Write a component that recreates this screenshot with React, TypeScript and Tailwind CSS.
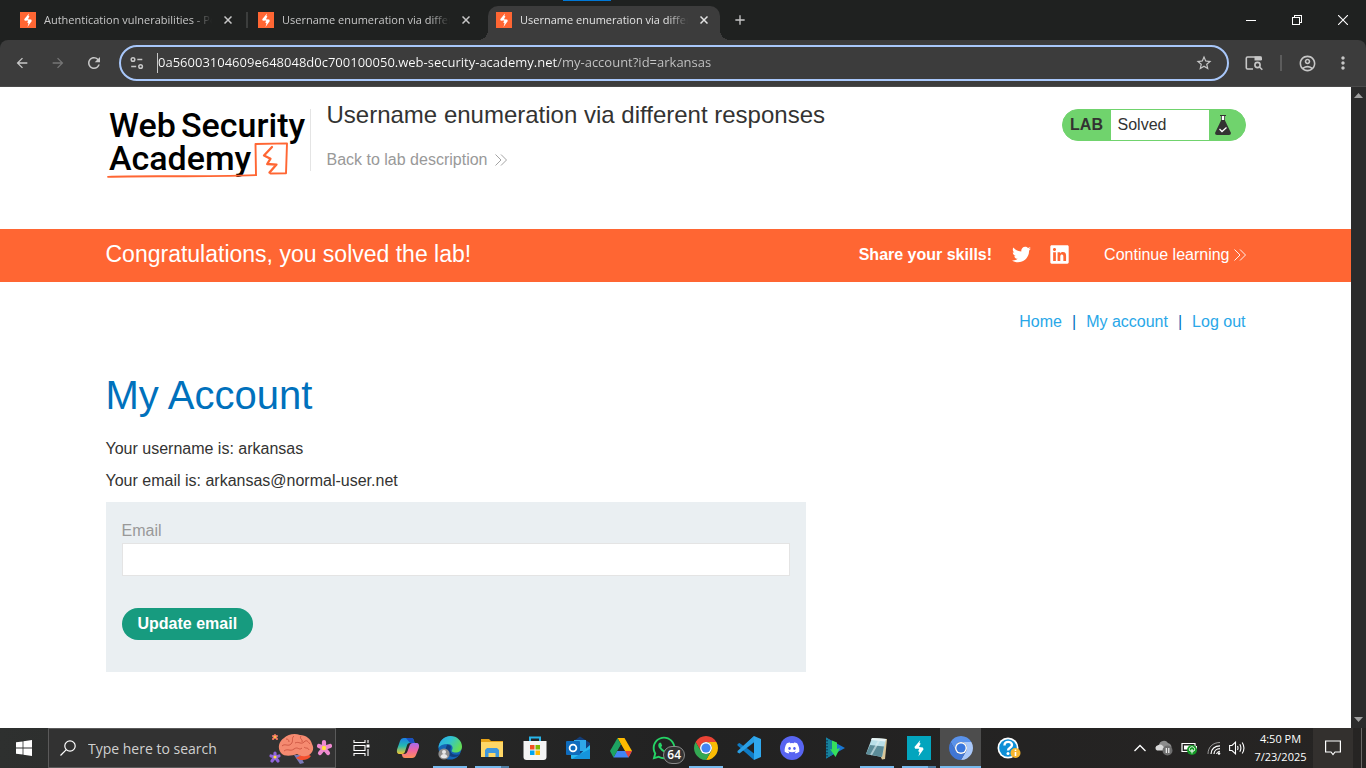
import React from "react";
import type { ReactNode } from "react";
import { FaTwitter, FaLinkedin, FaWhatsapp, FaDiscord } from "react-icons/fa";
import {
  MdArrowBack,
  MdArrowForward,
  MdRefresh,
  MdStarBorder,
  MdOutlineAccountCircle,
  MdMoreVert,
  MdAdd,
} from "react-icons/md";

const TAB_TITLES = [
  { id: 1, title: "Authentication vulnerabilities - PortSwigger", active: false },
  { id: 2, title: "Username enumeration via different responses", active: false },
  { id: 3, title: "Username enumeration via different responses", active: true },
];

function Bolt() {
  return (
    <path
      fill="#fff"
      d="M9 1.500 4.200 7.200l.6 1.500 3.400-.1-.9 2.200 1.200.5L7.500 15l4.300-6-.6-1.400-3.200-.4L9.400 4.300l-1-.4z"
    />
  );
}

function Favicon() {
  return (
    <svg viewBox="0 0 16 16" className="size-4 shrink-0" aria-hidden="true">
      <rect width="16" height="16" fill="#ff6633" />
      <Bolt />
    </svg>
  );
}

function Tab({ title, active }: { title: string; active: boolean }) {
  return (
    <div
      className={
        active
          ? "relative flex h-[34px] w-[232px] items-center gap-2 rounded-t-[10px] bg-[#3c3c3c] px-2 pb-1.5 text-[#e3e3e3]"
          : "relative flex h-[34px] w-[232px] items-center gap-2 px-2 pb-1.5 text-[#c7c7c7]"
      }
    >
      {active && (
        <>
          <span className="absolute -left-2.5 bottom-0 size-2.5 bg-[radial-gradient(circle_at_0_0,transparent_10px,#3c3c3c_10px)]" />
          <span className="absolute -right-2.5 bottom-0 size-2.5 bg-[radial-gradient(circle_at_100%_0,transparent_10px,#3c3c3c_10px)]" />
        </>
      )}
      <Favicon />
      <span className="min-w-0 flex-1 overflow-hidden whitespace-nowrap text-[11px] leading-4 [mask-image:linear-gradient(to_right,#000_88%,transparent)]">
        {title}
      </span>
      <button type="button" aria-label="Close tab" className="grid size-4 place-items-center">
        <svg viewBox="0 0 8 8" className="size-2" stroke="currentColor" strokeWidth="1.500">
          <path d="m.500.500 7 7M7.500.500l-7 7" />
        </svg>
      </button>
    </div>
  );
}

function TitleBar() {
  return (
    <div className="relative flex h-10 shrink-0 items-end bg-[#1f2120] pl-3">
      <span className="absolute left-[563px] top-0 h-px w-12 bg-[#0078d7]" />
      <Tab title={TAB_TITLES[0].title} active={false} />
      <span className="flex h-[34px] w-1.5 justify-center pt-1.5">
        <span className="h-4 w-0.5 bg-[#3c3e3d]" />
      </span>
      <Tab title={TAB_TITLES[1].title} active={false} />
      <span className="w-1.5" />
      <Tab title={TAB_TITLES[2].title} active />
      <button type="button" aria-label="New tab" className="mb-2 ml-2 grid size-6 place-items-center text-[#c7c7c7]">
        <MdAdd className="size-4" />
      </button>
      <div className="ml-auto flex h-10 text-white">
        <button type="button" aria-label="Minimize" className="grid w-[46px] place-items-center">
          <svg viewBox="0 0 10 10" className="size-2.5" shapeRendering="crispEdges">
            <path d="M0 5.5h10" stroke="currentColor" />
          </svg>
        </button>
        <button type="button" aria-label="Restore" className="grid w-[46px] place-items-center">
          <svg viewBox="0 0 10 10" className="size-2.5" fill="none" stroke="currentColor" shapeRendering="crispEdges">
            <path d="M.5 2.5h7v7h-7zM2.5 2.5v-2h7v7h-2" />
          </svg>
        </button>
        <button type="button" aria-label="Close" className="grid w-[46px] place-items-center">
          <svg viewBox="0 0 10 10" className="size-2.5" fill="none" stroke="currentColor" strokeWidth="1.1">
            <path d="M0 0l10 10M10 0 0 10" />
          </svg>
        </button>
      </div>
    </div>
  );
}

function Toolbar() {
  return (
    <div className="shrink-0 bg-[#1f2120]">
      <div className="flex h-[47px] items-center rounded-t-[8px] border-b border-[#4a4a4a] bg-[#3c3c3c] pl-3 text-[#c7c7c7]">
        <div className="flex w-[107px] gap-4">
          <button type="button" aria-label="Back" className="grid size-5 place-items-center">
            <MdArrowBack className="size-4" />
          </button>
          <button type="button" aria-label="Forward" className="grid size-5 place-items-center text-[#757575]">
            <MdArrowForward className="size-4" />
          </button>
          <button type="button" aria-label="Reload" className="grid size-5 place-items-center">
            <MdRefresh className="size-[18px]" />
          </button>
        </div>
        <div className="flex h-9 flex-1 items-center rounded-full border-2 border-[#a8c7fa] bg-[#3c3c3c] pl-2">
          <svg viewBox="0 0 16 16" className="size-4" fill="none" stroke="currentColor" strokeWidth="1.5" aria-hidden="true">
            <circle cx="4" cy="4.5" r="1.8" />
            <path d="M8.3 4.5h5M2.2 11.5h5" />
            <circle cx="11.6" cy="11.5" r="1.8" />
          </svg>
          <span className="ml-3 h-5 w-px bg-[#c7c7c7]" />
          <input
            aria-label="Address bar"
            readOnly
            value="0a56003104609e648048d0c700100050.web-security-academy.net/my-account?id=arkansas"
            className="min-w-0 flex-1 bg-[linear-gradient(to_right,#ffffff_400px,#c7c7c7_400px)] bg-clip-text text-[13px] text-transparent outline-none"
          />
          <button type="button" aria-label="Bookmark this tab" className="mr-[13px] grid size-5 place-items-center">
            <MdStarBorder className="size-[18px]" />
          </button>
        </div>
        <div className="flex w-[137px] items-center">
          <button type="button" aria-label="Search tabs" className="ml-[15px] grid size-5 place-items-center">
            <svg viewBox="0 0 18 16" className="h-4 w-[18px]" fill="none" stroke="currentColor" strokeWidth="1.6">
              <path d="M8 14H2.5A1.2 1.2 0 0 1 1.3 12.800V3.200A1.2 1.2 0 0 1 2.5 2H15a1.200 1.200 0 0 1 1.200 1.200V5" />
              <path d="M9.500 1.500h7v4h-7z" fill="currentColor" stroke="none" />
              <circle cx="12.500" cy="10" r="2.600" />
              <path d="m14.500 12 2.800 2.800" />
            </svg>
          </button>
          <span className="ml-4 h-4 w-0.5 bg-[#5c5c5c]" />
          <button type="button" aria-label="Profile" className="ml-[15px] grid size-5 place-items-center">
            <MdOutlineAccountCircle className="size-[19px]" />
          </button>
          <button type="button" aria-label="Menu" className="ml-4 grid size-5 place-items-center">
            <MdMoreVert className="size-5" />
          </button>
        </div>
      </div>
    </div>
  );
}

function Chevrons() {
  return (
    <svg viewBox="0 0 12 12" className="size-3" fill="none" stroke="currentColor" strokeWidth="0.9" aria-hidden="true">
      <path d="M.5.5 6 6 .5 11.500M6 .5 11.500 6 6 11.500" />
    </svg>
  );
}

function AcademyLogo() {
  return (
    <svg viewBox="0 0 200 72" className="h-[72px] w-[200px] overflow-visible" role="img" aria-label="Web Security Academy">
      <g fill="#000" fontFamily="Roboto, 'Liberation Sans', sans-serif" fontSize="34" fontWeight="500">
        <text x="3" y="28">Web</text>
        <text x="75" y="28">Security</text>
        <text x="3" y="61">Academy</text>
      </g>
      <g fill="none" stroke="#ff6633" strokeLinejoin="round" strokeLinecap="round">
        <path d="M2 67.800c35-1.400 90 .5 148-1.700" strokeWidth="1.800" />
        <path d="M150 66 149.500 35l31.500-.6-1 29.800-15.500.3" strokeWidth="1.900" />
        <path d="m166 38-8 8.500 6.500 3.200-3.300 5.300 9.300.6-7 8" strokeWidth="2.300" />
      </g>
    </svg>
  );
}

function LabStatus() {
  return (
    <div className="flex h-8 w-[184px] overflow-hidden rounded-full border border-[#70d36d] bg-[#70d36d] text-[#333332]">
      <span className="flex w-12 items-center justify-center text-[16px] font-bold">LAB</span>
      <span className="flex-1 bg-white pl-[7px] text-[16px] leading-[29px]">Solved</span>
      <span className="flex w-9 items-center pl-1.5">
        <svg viewBox="0 0 16 20" className="h-5 w-4" aria-hidden="true">
          <path d="M6 .500h4v5l6 12.500q0 2-2 2H2q-2 0-2-2L6 5.500z" fill="#333332" />
          <path d="M6.800 1h2.400v4H6.800z" fill="#fff" />
          <path d="M5 .500h6" stroke="#333332" />
          <path d="m4.500 14 2.500 2.500 4.500-4" fill="none" stroke="#fff" strokeWidth="1.300" />
        </svg>
      </span>
    </div>
  );
}

function LabPage() {
  return (
    <div className="min-w-0 flex-1 overflow-hidden bg-white font-['Liberation_Sans',Arial,sans-serif] text-[16px] text-[#333332]">
      <header className="mx-auto flex h-[142px] max-w-[1140px] items-start pt-[22px]">
        <a href="#academy" className="w-[204px]">
          <AcademyLogo />
        </a>
        <div className="h-[62px] w-px bg-[#e4e4e4]" />
        <div className="-mt-2 ml-4 flex-1">
          <h2 className="text-[24px] leading-7">Username enumeration via different responses</h2>
          <a href="#description" className="mt-[19px] inline-flex items-center gap-2 leading-6 text-[#999]">
            Back to lab description
            <Chevrons />
          </a>
        </div>
        <LabStatus />
      </header>

      <section className="bg-[#ff6633] text-white">
        <div className="mx-auto flex h-[53px] max-w-[1140px] items-center pb-0.5">
          <h3 className="flex-1 text-[23px]">Congratulations, you solved the lab!</h3>
          <span className="font-bold">Share your skills!</span>
          <a href="#twitter" aria-label="Share on Twitter" className="ml-5">
            <FaTwitter className="size-[19px]" />
          </a>
          <a href="#linkedin" aria-label="Share on LinkedIn" className="ml-[18px]">
            <FaLinkedin className="size-[21px]" />
          </a>
          <a href="#continue" className="ml-[34px] flex items-center gap-1">
            Continue learning
            <Chevrons />
          </a>
        </div>
      </section>

      <main className="mx-auto max-w-[1140px]">
        <nav className="flex justify-end gap-2.5 pt-7 leading-6 text-[#29a7e8]">
          <a href="#home">Home</a>
          <span className="text-[#0071bc]">|</span>
          <a href="#account">My account</a>
          <span className="text-[#0071bc]">|</span>
          <a href="#logout">Log out</a>
        </nav>
        <h1 className="mt-9 text-[40px] leading-[50px] text-[#0071bc]">My Account</h1>
        <div className="mt-[17px] flex flex-col gap-2 leading-6">
          <p>Your username is: arkansas</p>
          <p>Your email is: arkansas@normal-user.net</p>
        </div>
        <form
          className="mt-[9px] max-w-[700px] bg-[#eaeff2] px-4 pb-8 pt-4"
          onSubmit={(event) => event.preventDefault()}
        >
          <label htmlFor="email" className="block leading-[25px] text-[#999]">
            Email
          </label>
          <input id="email" type="email" className="block h-[33px] w-full border border-[#e4e4e4] bg-white px-2 outline-none" />
          <button type="submit" className="mt-8 block h-8 rounded-full bg-[#179b7f] px-4 font-bold text-white">
            Update email
          </button>
        </form>
      </main>
    </div>
  );
}

function ScrollBar() {
  return (
    <div className="flex w-[15px] shrink-0 flex-col items-center justify-between bg-[#2b2b2b] py-1.5 text-[#9f9f9f]">
      <svg viewBox="0 0 9 5" className="h-[5px] w-[9px]" fill="currentColor" aria-hidden="true">
        <path d="M0 5h9L4.500 0z" />
      </svg>
      <svg viewBox="0 0 9 5" className="h-[5px] w-[9px]" fill="currentColor" aria-hidden="true">
        <path d="M0 0h9L4.500 5z" />
      </svg>
    </div>
  );
}

function BrainArt() {
  return (
    <svg viewBox="0 0 66 34" className="h-[34px] w-[66px] shrink-0" aria-hidden="true">
      <path d="M26 24h6l4 8-4 1z" fill="#7b79b8" />
      <path d="M28 27c4 3 12 3 15-2l-6-3z" fill="#f4502f" />
      <path
        d="M13 22c-4-5-2-12 3-15 4-4 11-5 16-3 6 0 11 4 12 9 3 5 0 11-6 12-4 1-7-1-9-2-5 2-13 3-16-1z"
        fill="#f58a70"
      />
      <path
        d="M14 15c3-3 6 1 9-2s0-6 3-8M16 20c4-3 6 1 10-2s5 2 8-1M27 12c4-2 6 2 9-1s4 0 6 2M33 5c-2 3 2 3 1 6M18 8c2 0 3 1 3 3M36 16c2 2 4 0 5 3"
        fill="none"
        stroke="#c9523f"
        strokeWidth="0.900"
      />
      <g stroke="#ef8ad0" strokeWidth="4.200" strokeLinecap="round">
        <path d="m56 17 0-6M56 17l6-2M56 17l4 5M56 17l-4 5M56 17l-5-2" />
      </g>
      <circle cx="56" cy="17" r="2.200" fill="#ffe23d" />
      <g stroke="#9064dc" strokeWidth="3.200" strokeLinecap="round">
        <path d="M7 26v-4M7 26l4-1M7 26l3 4M7 26l-3 4M7 26l-4-1" />
      </g>
      <circle cx="7" cy="26" r="1.600" fill="#ffe23d" />
      <g stroke="#f07a62" strokeWidth="2" strokeLinecap="round">
        <path d="M7 6V4M7 6l2-1M7 6l2 2M7 6 5 8M7 6 5 5" />
      </g>
      <circle cx="7" cy="6" r="1" fill="#ffd23d" />
    </svg>
  );
}

function Icon({ children }: { children: ReactNode }) {
  return (
    <svg viewBox="0 0 24 24" className="size-6" aria-hidden="true">
      {children}
    </svg>
  );
}

function Browser({ top, right, left, center }: { top: string; right: string; left: string; center: string }) {
  return (
    <Icon>
      <path d="M12 6H22.390A12 12 0 0 0 1.610 6L6.800 15A6 6 0 0 1 12 6Z" fill={top} />
      <path d="M12 6H22.390A12 12 0 0 1 12 24L17.200 15A6 6 0 0 0 12 6Z" fill={right} />
      <path d="M1.610 6L6.800 15A6 6 0 0 0 17.200 15L12 24A12 12 0 0 1 1.610 6Z" fill={left} />
      <circle cx="12" cy="12" r="6" fill="#fff" />
      <circle cx="12" cy="12" r="4.600" fill={center} />
    </Icon>
  );
}

const APP_BUTTON_CLASSES: Record<string, string> = {
  idle: "relative grid h-10 w-[43px] place-items-center",
  open: "relative grid h-10 w-[42px] place-items-center",
  group: "relative grid h-10 w-[42px] place-items-center",
  current: "relative grid h-10 w-[41px] place-items-center bg-[#4d4d4d]",
};

function AppButton({ label, state = "idle", children }: { label: string; state?: string; children: ReactNode }) {
  return (
    <button type="button" aria-label={label} className={APP_BUTTON_CLASSES[state]}>
      {children}
      {state === "open" && <span className="absolute inset-x-1 bottom-0 h-0.5 bg-[#76b9ed]" />}
      {state === "current" && <span className="absolute inset-x-0 bottom-0 h-0.5 bg-[#76b9ed]" />}
      {state === "group" && (
        <span className="absolute inset-x-1 bottom-0 flex h-0.5">
          <span className="flex-1 bg-[#76b9ed]" />
          <span className="w-2 bg-[#4f7ea3]" />
        </span>
      )}
    </button>
  );
}

function PinnedApps() {
  return (
    <div className="flex">
      <AppButton label="Copilot">
        <Icon>
          <defs>
            <linearGradient id="cp1" x1="0" y1="0" x2="0" y2="1">
              <stop offset="0" stopColor="#1a7fe8" />
              <stop offset=".5" stopColor="#25b9b0" />
              <stop offset="1" stopColor="#f5c52c" />
            </linearGradient>
            <linearGradient id="cp2" x1="0" y1="0" x2="0" y2="1">
              <stop offset="0" stopColor="#a66bf0" />
              <stop offset=".5" stopColor="#f065a0" />
              <stop offset="1" stopColor="#ff8f58" />
            </linearGradient>
          </defs>
          <path d="M8 2h7c2 0 2.600 1.200 3 3l.6 2H14c-2 0-2.700 1-3.200 3l-1.600 5c-.5 2-1.400 3-3.200 3H4c-3 0-3.500-2-2.800-5L4 5c.700-2 2-3 4-3z" fill="url(#cp1)" />
          <path d="M16 22H9c-2 0-2.600-1.200-3-3l-.4-1H8c2 0 3-1 3.600-3l1.800-5C14 8 15 7 17 7h3c3 0 3.500 2 2.800 5L20 19c-.700 2-2 3-4 3z" fill="url(#cp2)" />
          <path d="M10 2h5c2 0 2.600 1.200 3 3l.6 2H14z" fill="#1b4fc0" />
        </Icon>
      </AppButton>
      <AppButton label="Microsoft Edge" state="open">
        <Icon>
          <defs>
            <linearGradient id="edge" x1="0" y1="0" x2="1" y2=".5">
              <stop offset="0" stopColor="#2aa9e8" />
              <stop offset=".5" stopColor="#31c3d0" />
              <stop offset="1" stopColor="#63dc57" />
            </linearGradient>
          </defs>
          <circle cx="12" cy="12" r="11.500" fill="#1565b5" />
          <path d="M.500 12C1 5 6 0 12.500 0 19 0 24 5 24 10.500c0 4-3 6-6.500 6-3 0-4.500-1-3.500-2.500 1.500-2.500 0-6-4.500-6C5 8 2 9.500.500 12z" fill="url(#edge)" />
          <path d="M9 9c-3 5 0 11 6 12 3 .5 6-1 7.500-3-4 1.500-9 1-10-3-.5-2 .5-3 .5-4-.5-1.500-2.500-2.500-4-2z" fill="#103f80" />
          <circle cx="6" cy="18" r="5.600" fill="#8d8d8d" />
          <circle cx="6" cy="16" r="2" fill="#e8e8e8" />
          <path d="M2.500 21c.5-4 6.500-4 7 0q-3.500 2.500-7 0z" fill="#e8e8e8" />
        </Icon>
      </AppButton>
      <AppButton label="File Explorer" state="group">
        <Icon>
          <path d="M1 3h8l2 2h12v16H1z" fill="#e8a317" />
          <path d="M1 6h22v15H1z" fill="#ffd766" />
          <path d="M5 21v-7l2-2h10l2 2v7h-3.500v-4h-7v4z" fill="#3f97dc" />
        </Icon>
      </AppButton>
      <AppButton label="Microsoft Store">
        <Icon>
          <path d="M7 7V1.500h10V7" fill="none" stroke="#28b5ea" strokeWidth="2" />
          <path d="M.500 5h23v16q0 3-3 3h-17q-3 0-3-3z" fill="#f4f4f4" />
          <path d="M7 9h4.500v4.500H7z" fill="#f25022" />
          <path d="M12.500 9H17v4.500h-4.500z" fill="#7fba00" />
          <path d="M7 14.500h4.500V19H7z" fill="#00a4ef" />
          <path d="M12.500 14.500H17V19h-4.500z" fill="#ffb900" />
        </Icon>
      </AppButton>
      <AppButton label="Outlook">
        <Icon>
          <path d="m5 7 9-6.500L24 7v15q0 1-1 1H6q-1 0-1-1z" fill="#123f7b" />
          <path d="M8 4h12v11H8z" fill="#2fa8e8" />
          <path d="m5 13 9 5 10-9v13q0 1-1 1H6q-1 0-1-1z" fill="#28b8ef" />
          <path d="m14 18 10-5v9q0 1-1 1H6z" fill="#1594dc" />
          <rect y="5" width="14" height="14" rx="1" fill="#0f6cbd" />
          <circle cx="7" cy="12" r="3.400" fill="none" stroke="#fff" strokeWidth="1.800" />
        </Icon>
      </AppButton>
      <AppButton label="Google Drive">
        <Icon>
          <path d="M8.500 2h7l7.500 13h-7z" fill="#ffba00" />
          <path d="M8 15h15l-3.500 6.500h-15z" fill="#4285f4" />
          <path d="M8.500 2 1 15l3.500 6.500L12 8.500z" fill="#1ea362" />
          <path d="M16 15h7l-3.500 6.500z" fill="#ea4335" />
          <path d="m12 9 3.500 6h-7z" fill="#262626" />
        </Icon>
      </AppButton>
      <AppButton label="WhatsApp">
        <FaWhatsapp className="size-[26px] text-[#25d366]" />
        <span className="absolute right-0 top-[18px] rounded-full border border-[#8a8a8a] bg-[#333] px-[3px] text-[12px] font-semibold leading-4 text-white">
          64
        </span>
      </AppButton>
      <AppButton label="Google Chrome" state="open">
        <Browser top="#ea4335" right="#fbbc04" left="#34a853" center="#4285f4" />
      </AppButton>
      <AppButton label="Visual Studio Code">
        <Icon>
          <path d="M17 0 6.500 10 2.500 7 .500 8v1.500L17 24z" fill="#0f7bc4" />
          <path d="M17 0v6L2.500 17.500.500 16.500V15z" fill="#2a9fe5" />
          <path d="m17 0 7 3v18l-7 3z" fill="#2fa8ee" />
          <path d="M17 6.500v11L9.800 12z" fill="#232323" />
        </Icon>
      </AppButton>
      <AppButton label="Discord">
        <span className="grid size-6 place-items-center rounded-full bg-[#5865f2] text-white">
          <FaDiscord className="size-4" />
        </span>
      </AppButton>
      <AppButton label="Media downloader">
        <Icon>
          <path d="M3 1.500 22 12 3 22.500z" fill="#1976d2" />
          <path d="M3 1.500 9 5v14l-6 3.500z" fill="#16829c" />
          <path d="M4 4v17" stroke="#0b3d62" strokeWidth="1.500" strokeDasharray="1.500 1.500" />
          <path d="m9 4.500 5 2V13l3-1-4.500 9L7 13l2 .500z" fill="#35e05d" />
        </Icon>
      </AppButton>
      <AppButton label="Notepad" state="open">
        <Icon>
          <path d="M7 2 22 3l-2 20-3 .500z" fill="#d9c79a" />
          <path d="M7 2 21 3 17 21 1 18z" fill="#b9dfe8" />
          <path d="m5 9 14 1.500L17 21 1 18z" fill="#5c8c98" />
          <path d="M7 2 21 3 20 5.500 6 4z" fill="#e8f3f5" />
          <path d="m15 3-9 16" stroke="#dff0f3" strokeWidth="2" opacity=".6" />
        </Icon>
      </AppButton>
      <AppButton label="Burp Suite" state="group">
        <svg viewBox="-2 -2 20 20" className="size-6 bg-[#03a5be]" aria-hidden="true">
          <Bolt />
        </svg>
      </AppButton>
      <AppButton label="Chromium" state="current">
        <Browser top="#5a92ea" right="#a9c8fa" left="#4076d4" center="#3a78de" />
      </AppButton>
      <span className="w-1.5" />
      <AppButton label="Get Help">
        <Icon>
          <circle cx="11" cy="12" r="10.500" fill="#fff" />
          <circle cx="11" cy="12" r="8.800" fill="#0d8fd6" />
          <path d="M7.500 9.500c0-5 7.500-4.500 7.500-.500 0 3-4 2.500-4 5.500" fill="none" stroke="#fff" strokeWidth="2.400" />
          <circle cx="11" cy="17.500" r="1.500" fill="#fff" />
          <circle cx="18.500" cy="17" r="5" fill="#f5b52e" />
          <path d="M18.500 16v4M18.500 13.500v1.400" stroke="#fff" strokeWidth="1.600" />
        </Icon>
      </AppButton>
    </div>
  );
}

function Tray() {
  return (
    <div className="ml-auto flex items-center text-white">
      <button type="button" aria-label="Show hidden icons" className="grid h-10 w-6 place-items-center">
        <svg viewBox="0 0 12 8" className="h-2 w-3" fill="none" stroke="currentColor" strokeWidth="1.300">
          <path d="m.500 7 5.500-5.500L11.500 7" />
        </svg>
      </button>
      <button type="button" aria-label="OneDrive" className="grid h-10 w-6 place-items-center">
        <svg viewBox="0 0 18 16" className="h-4 w-[18px]">
          <path d="M3 10a3 3 0 0 1 1-5 5 5 0 0 1 9-2 4 4 0 0 1 2 7z" fill="#8c8c8c" />
          <path d="M2 10.500a2.800 2.800 0 0 1 1-5.300q2.500-1.700 5 .8l3 4.500z" fill="#d9d9d9" />
          <circle cx="12.500" cy="10.500" r="5" fill="#6e6e6e" />
          <path d="M11.300 8v5M13.800 8v5" stroke="#fff" strokeWidth="1.100" />
        </svg>
      </button>
      <button type="button" aria-label="Battery" className="grid h-10 w-[26px] place-items-center">
        <svg viewBox="0 0 16 14" className="h-3.5 w-4" fill="none" stroke="currentColor">
          <path d="M1 2.500h13v8H1z" strokeWidth="1.200" />
          <path d="M3 4.500h7v4H3z" fill="currentColor" stroke="none" />
          <path d="M15.500 5v3" />
          <circle cx="11" cy="9" r="5" fill="#159a26" stroke="none" />
          <path d="M11 12.500V8M9 10c-1.500-2 0-4 2-4.300 2 .3 3.500 2.300 2 4.300z" strokeWidth="1" />
        </svg>
      </button>
      <button type="button" aria-label="Wi-Fi" className="grid h-10 w-6 place-items-center">
        <svg viewBox="0 0 14 14" className="size-3.5" fill="none" stroke="currentColor">
          <path d="M1 13C1 6 6 1.500 13 1.500" opacity=".55" />
          <path d="M4 13c0-5 4-8.200 9-8.200M7 13c0-3.300 2.600-5.300 6-5.300" strokeWidth="1.200" />
          <path d="M9.500 13q.300-2.500 3.500-2.800" />
          <circle cx="12" cy="12.500" r="1.300" fill="currentColor" stroke="none" />
        </svg>
      </button>
      <button type="button" aria-label="Volume" className="grid h-10 w-[22px] place-items-center">
        <svg viewBox="0 0 17 14" className="h-3.5 w-[17px]" fill="none" stroke="currentColor" strokeWidth="1.100">
          <path d="M.600 4.500H3l3.500-3.300v11.600L3 9.500H.600z" />
          <path d="M8.500 5q1 2 0 4M10.800 3.300q2.200 3.700 0 7.400M13.200 1.500q3.500 5.500 0 11" />
        </svg>
      </button>
      <div className="flex w-[65px] flex-col items-center text-[11px] leading-[18px]">
        <span>4:50 PM</span>
        <span>7/23/2025</span>
      </div>
      <button type="button" aria-label="Notifications" className="grid h-10 w-10 place-items-center bg-[#33302e]">
        <svg viewBox="0 0 16 16" className="size-4" fill="none" stroke="currentColor" strokeWidth="1.200">
          <path d="M.600 1h14.800v11H10l-2 2.500L6 12H.600z" />
        </svg>
      </button>
      <span className="ml-2 mr-1 h-10 w-px bg-[#6a6866]" />
    </div>
  );
}

function Taskbar() {
  return (
    <footer className="flex h-10 shrink-0 bg-[linear-gradient(to_right,#2e302f,#222222_50%,#262423)]">
      <button type="button" aria-label="Start" className="grid w-12 place-items-center">
        <svg viewBox="0 0 16 16" className="size-4" fill="#fff">
          <path d="M0 2.300 6.600 1.400v6.200H0zM7.400 1.300 16 0v7.600H7.400zM0 8.400h6.600v6.200L0 13.700zM7.400 8.400H16V16l-8.600-1.200z" />
        </svg>
      </button>
      <label className="flex w-[288px] items-center border border-[#5a5a5a] bg-[#323232] pl-[11px] pr-px">
        <svg viewBox="0 0 16 16" className="size-4 shrink-0" fill="none" stroke="#fff" strokeWidth="1.200" aria-hidden="true">
          <circle cx="10" cy="6" r="5.200" />
          <path d="M6.300 9.700.500 15.500" />
        </svg>
        <input
          aria-label="Type here to search"
          placeholder="Type here to search"
          className="ml-3 min-w-0 flex-1 bg-transparent text-[14px] text-white outline-none placeholder:text-[#d0d0d0]"
        />
        <BrainArt />
      </label>
      <button type="button" aria-label="Task view" className="grid w-[50px] place-items-center">
        <svg viewBox="0 0 17 16" className="h-4 w-[17px]" fill="none" stroke="#fff" strokeWidth="1.100">
          <path d="M1 0v2.500h11V0M1 16v-2.500h11V16M1 5.500h11v5H1zM15 0v3M15 9v7" />
          <path d="M13.500 4.500h3v3h-3z" fill="#fff" stroke="none" />
        </svg>
      </button>
      <PinnedApps />
      <Tray />
    </footer>
  );
}

export default function App() {
  return (
    <div className="flex h-screen flex-col overflow-hidden font-['Open_Sans','Noto_Sans',sans-serif]">
      <TitleBar />
      <Toolbar />
      <div className="flex min-h-0 flex-1">
        <LabPage />
        <ScrollBar />
      </div>
      <Taskbar />
    </div>
  );
}
